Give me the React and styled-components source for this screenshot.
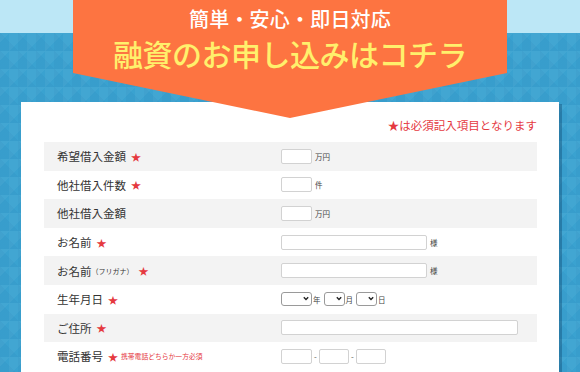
import React from 'react';
import styled, { createGlobalStyle } from 'styled-components';

const GlobalStyle = createGlobalStyle`
  html, body {
    margin: 0;
    padding: 0;
  }
  body {
    font-family: "Noto Sans CJK JP", "Noto Sans", sans-serif;
    color: #333;
    background-color: #3aa2d0;
  }
`;

const Page = styled.div`
  height: 372px;
  overflow: hidden;
  background-color: #3aa2d0;
  background-image:
    linear-gradient(#bce7f6 0, #bce7f6 33px, transparent 33px),
    linear-gradient(45deg, rgba(0, 40, 90, 0.035) 50%, transparent 50%),
    linear-gradient(135deg, rgba(255, 255, 255, 0.045) 50%, transparent 50%);
  background-size: 100% 100%, 18px 18px, 18px 18px;
  background-position: 0 0, 0 33px, 9px 33px;
  background-repeat: no-repeat, repeat, repeat;
`;

const Banner = styled.div`
  position: relative;
  z-index: 2;
  width: 434px;
  height: 118px;
  margin: 0 auto;
  background: #fd7441;
  clip-path: polygon(0 0, 100% 0, 100% 73px, 50% 118px, 0 73px);
  display: flex;
  flex-direction: column;
  align-items: center;
  padding-top: 8px;
  box-sizing: border-box;
`;

const Catch = styled.div`
  color: #fff;
  font-size: 20px;
  line-height: 22px;
  font-weight: 500;
  letter-spacing: 0.2px;
`;

const Title = styled.div`
  margin-top: 6px;
  color: #fff06c;
  font-size: 30px;
  line-height: 34px;
  font-weight: 500;
  letter-spacing: -0.5px;
`;

const Card = styled.div`
  position: relative;
  z-index: 1;
  margin: -16px 21px 0 21px;
  background: #fff;
  box-shadow: 3px 2px 0 rgba(10, 60, 100, 0.35);
  padding: 14px 22px 0 23px;
  width: 538px;
  box-sizing: border-box;
  height: 270px;
`;

const Note = styled.div`
  text-align: right;
  color: #e5393f;
  font-size: 11.5px;
  line-height: 18px;
  margin-bottom: 8px;
`;

const Table = styled.div`
  display: grid;
  grid-auto-rows: 28.6px;
`;

const Row = styled.div`
  display: grid;
  grid-template-columns: 237px 1fr;
  align-items: center;
  background: ${({ $shaded }) => ($shaded ? '#f3f3f3' : '#fff')};
`;

const Label = styled.div`
  padding-left: 13px;
  font-size: 11.5px;
  color: #333;
  display: flex;
  align-items: center;
  white-space: nowrap;
`;

const Small = styled.span`
  font-size: 7px;
`;

const Star = styled.span`
  color: #e5393f;
  font-size: 10px;
  margin-left: 5px;
`;

const Hint = styled.span`
  color: #e5393f;
  font-size: 6.8px;
  margin-left: 3px;
`;

const Field = styled.div`
  display: flex;
  align-items: center;
`;

const Input = styled.input`
  box-sizing: border-box;
  width: ${({ $w }) => $w}px;
  height: 15px;
  margin: 0;
  padding: 0 2px;
  border: 1px solid #d2d2d2;
  border-radius: 2px;
  background: #fff;
  outline: none;
`;

const Unit = styled.span`
  font-size: 7.5px;
  color: #444;
  margin-left: ${({ $tight }) => ($tight ? '1px' : '3px')};
`;

const Dash = styled.span`
  font-size: 8px;
  color: #555;
  width: 7px;
  text-align: center;
`;

const SelectWrap = styled.span`
  position: relative;
  display: inline-flex;
  margin-left: ${({ $first }) => ($first ? '0' : '3px')};
`;

const Select = styled.select`
  box-sizing: border-box;
  appearance: none;
  width: ${({ $w }) => $w}px;
  height: 14px;
  margin: 0;
  padding: 0;
  border: 1px solid #9a9a9a;
  border-radius: 3px;
  background: #fff;
`;

const Chevron = styled.svg`
  position: absolute;
  right: 3px;
  top: 4px;
  pointer-events: none;
`;

function Pick({ w, first }) {
  return (
    <SelectWrap $first={first}>
      <Select $w={w}>
        <option value="" />
      </Select>
      <Chevron width="6" height="5" viewBox="0 0 6 5">
        <path d="M0.8 1.2 L3 3.4 L5.2 1.2" fill="none" stroke="#222" strokeWidth="1.4" />
      </Chevron>
    </SelectWrap>
  );
}

const rows = [
  { label: '希望借入金額', required: true, field: <><Input $w={31} /><Unit>万円</Unit></> },
  { label: '他社借入件数', required: true, field: <><Input $w={31} /><Unit>件</Unit></> },
  { label: '他社借入金額', required: false, field: <><Input $w={31} /><Unit>万円</Unit></> },
  { label: 'お名前', required: true, field: <><Input $w={146} /><Unit>様</Unit></> },
  {
    label: <>お名前<Small>（フリガナ）</Small></>,
    required: true,
    field: <><Input $w={146} /><Unit>様</Unit></>,
  },
  {
    label: '生年月日',
    required: true,
    field: (
      <>
        <Pick w={31} first />
        <Unit $tight>年</Unit>
        <Pick w={21} />
        <Unit $tight>月</Unit>
        <Pick w={21} />
        <Unit $tight>日</Unit>
      </>
    ),
  },
  { label: 'ご住所', required: true, field: <Input $w={237} /> },
  {
    label: '電話番号',
    required: true,
    hint: '携帯電話どちらか一方必須',
    field: (
      <>
        <Input $w={31} />
        <Dash>-</Dash>
        <Input $w={30} />
        <Dash>-</Dash>
        <Input $w={30} />
      </>
    ),
  },
];

export default function App() {
  return (
    <>
      <GlobalStyle />
      <Page>
        <Banner>
          <Catch>簡単・安心・即日対応</Catch>
          <Title>融資のお申し込みはコチラ</Title>
        </Banner>
        <Card>
          <Note>★は必須記入項目となります</Note>
          <Table>
            {rows.map((row, i) => (
              <Row key={i} $shaded={i % 2 === 0}>
                <Label>
                  {row.label}
                  {row.required && <Star>★</Star>}
                  {row.hint && <Hint>{row.hint}</Hint>}
                </Label>
                <Field>{row.field}</Field>
              </Row>
            ))}
          </Table>
        </Card>
      </Page>
    </>
  );
}
